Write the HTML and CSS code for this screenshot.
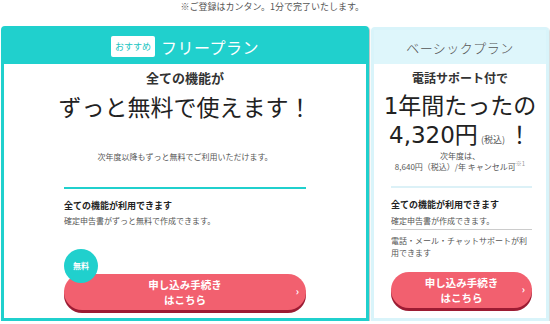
FILE: index.html
```html
<!DOCTYPE html>
<html lang="ja">
<head>
  <meta charset="UTF-8">
  <title>料金プラン</title>
  <link rel="stylesheet" href="styles.css">
</head>
<body>
  <p class="note">※ご登録はカンタン。1分で完了いたします。</p>

  <div class="plans">
    <div class="plan plan-free">
      <div class="plan-head">
        <span class="badge">おすすめ</span>
        <span class="plan-name">フリープラン</span>
      </div>
      <div class="plan-body">
        <p class="lead">全ての機能が</p>
        <p class="catch">ずっと無料で使えます！</p>
        <p class="small free-small">次年度以降もずっと無料でご利用いただけます。</p>
        <div class="inner">
          <hr class="rule">
          <p class="feature">全ての機能が利用できます</p>
          <p class="small">確定申告書がずっと無料で作成できます。</p>
          <a href="#" class="apply apply-free">
            <span class="free-mark">無料</span>
            <span class="apply-line">申し込み手続き</span>
            <span class="apply-line">はこちら</span>
            <span class="arrow">›</span>
          </a>
        </div>
      </div>
    </div>

    <div class="plan plan-basic">
      <div class="plan-head">
        <span class="plan-name">ベーシックプラン</span>
      </div>
      <div class="plan-body">
        <p class="lead">電話サポート付で</p>
        <p class="catch catch-first">1年間たったの</p>
        <p class="catch">4,320円<span class="tax">(税込)</span>！</p>
        <p class="small next-year">次年度は、</p>
        <p class="small next-year">8,640円（税込）/年 キャンセル可<span class="ref">※1</span></p>
        <div class="inner">
          <hr class="rule">
          <p class="feature">全ての機能が利用できます</p>
          <p class="small">確定申告書が作成できます。</p>
          <hr class="rule-gray">
          <p class="small support">電話・メール・チャットサポートが利用できます</p>
          <a href="#" class="apply apply-basic">
            <span class="apply-line">申し込み手続き</span>
            <span class="apply-line">はこちら</span>
            <span class="arrow">›</span>
          </a>
        </div>
      </div>
    </div>
  </div>
</body>
</html>
```

FILE: styles.css
```css
body {
  margin: 0;
  background: #fff;
  color: #333;
  font-family: "Noto Sans CJK JP", "Noto Sans", sans-serif;
}
p {
  margin: 0;
}
.note {
  width: 364px;
  text-align: right;
  font-size: 9px;
  line-height: 14px;
  color: #555;
}

.plans {
  display: flex;
  align-items: flex-start;
  gap: 2px;
  margin: 12px 0 0 1px;
}
.plan {
  box-sizing: border-box;
  height: 295px;
  border: 3px solid;
  border-radius: 4px 4px 0 0;
  display: flex;
  flex-direction: column;
}
.plan-free {
  width: 368px;
  border-color: #20d0cd;
  box-shadow: 1px 1px 1px rgba(0, 0, 0, 0.25);
}
.plan-basic {
  width: 178px;
  margin-top: 1px;
  height: 294px;
  border-color: #d9f4fa;
  box-shadow: 1px 1px 1px rgba(0, 0, 0, 0.15);
}

.plan-head {
  height: 35px;
  display: flex;
  align-items: center;
  justify-content: center;
  gap: 6px;
}
.plan-free .plan-head {
  background: #20d0cd;
}
.plan-basic .plan-head {
  background: #def6fb;
  height: 34px;
}
.badge {
  background: #fff;
  color: #20c4c1;
  font-size: 9px;
  line-height: 21px;
  padding: 0 4px;
  border-radius: 2px;
}
.plan-name {
  font-size: 16px;
  color: #fff;
  letter-spacing: 0.5px;
}
.plan-basic .plan-name {
  font-size: 13px;
  color: #555;
  font-weight: 300;
}

.plan-body {
  flex: 1;
  background: #fff;
  text-align: center;
}
.lead {
  margin-top: 6px;
  font-size: 13px;
  line-height: 16px;
  font-weight: bold;
}
.plan-basic .lead {
  font-size: 12px;
}
.catch {
  font-size: 23px;
  line-height: 28px;
  margin-top: 6px;
  color: #222;
}
.plan-basic .catch {
  font-family: "DejaVu Sans", "Noto Sans CJK JP", sans-serif;
  height: 29px;
  line-height: 29px;
  margin-top: 0;
  overflow: hidden;
}
.plan-basic .catch-first {
  margin-top: 6px;
}
.tax {
  font-family: "Noto Sans CJK JP", sans-serif;
  font-size: 9px;
  line-height: 1;
  color: #555;
  margin: 0 3px;
}
.small {
  font-size: 8px;
  line-height: 12px;
  color: #555;
}
.free-small {
  margin-top: 31px;
}
.next-year {
  line-height: 11px;
  height: 11px;
}
.ref {
  font-size: 6px;
  line-height: 1;
  color: #999;
  vertical-align: top;
}

.inner {
  text-align: left;
  margin: 0 60px;
}
.plan-basic .inner {
  margin: 0 14px 0 17px;
}
.rule {
  border: 0;
  height: 2px;
  background: #20d0cd;
  margin: 24px 0 0;
}
.plan-basic .rule {
  background: #dcf1f7;
  margin-top: 14px;
}
.rule-gray {
  border: 0;
  height: 1px;
  background: #ccc;
  margin: 2px 0 0;
}
.feature {
  margin: 10px 0 2px;
  font-size: 9px;
  line-height: 14px;
  font-weight: bold;
  color: #222;
}
.plan-basic .feature {
  margin: 10px 0 3px;
}
.support {
  margin-top: 5px;
}

.apply {
  position: relative;
  display: flex;
  flex-direction: column;
  align-items: center;
  justify-content: center;
  height: 36px;
  margin-top: 47px;
  border-radius: 18px;
  background: #f2606f;
  box-shadow: 0 3px 0 #9c1c33;
  color: #fff;
  font-size: 10.5px;
  font-weight: bold;
  text-decoration: none;
}
.apply-line {
  display: block;
  height: 15.5px;
  line-height: 15.5px;
}
.apply-basic {
  margin-top: 13px;
}
.arrow {
  position: absolute;
  right: 7px;
  top: 11px;
  font-size: 10px;
  line-height: 12px;
}
.free-mark {
  position: absolute;
  left: 0;
  top: -25px;
  width: 34px;
  height: 34px;
  border-radius: 50%;
  background: #20d0cd;
  font-size: 8px;
  line-height: 34px;
  text-align: center;
}
```
